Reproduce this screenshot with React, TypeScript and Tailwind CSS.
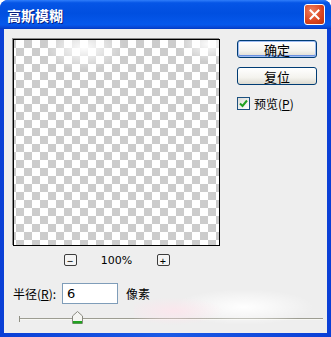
import React from "react";

const cjk = { fontFamily: '"Noto Sans CJK SC", "Liberation Sans", sans-serif' };

function XpButton({ label, isDefault }: { label: string; isDefault?: boolean }) {
  return (
    <button
      className={`flex h-[18px] w-[80px] items-center justify-center rounded-[3px] border border-[#003C74] bg-[linear-gradient(to_bottom,#ffffff_0%,#f4f3ee_60%,#dcdad0_100%)] text-[13px] leading-none text-black ${
        isDefault ? "shadow-[inset_0_0_0_1px_#9fbdf2,inset_0_-1px_0_1px_#6b91e0]" : ""
      }`}
      style={cjk}
    >
      {label}
    </button>
  );
}

function ZoomBtn({ sign }: { sign: string }) {
  return (
    <div className="flex h-[12px] w-[13px] items-center justify-center rounded-[2px] border border-[#3c3c3c] bg-[#f4f4f4] text-[11px] leading-none text-black">
      {sign}
    </div>
  );
}

export default function App() {
  return (
    <div className="flex h-[337px] w-[331px] flex-col overflow-hidden rounded-t-[8px] bg-[linear-gradient(to_right,#0a3fd6,#1a5ae6_50%,#0a3fd6)]">
      {/* title bar */}
      <div className="flex h-[29px] shrink-0 items-center justify-between bg-[linear-gradient(to_bottom,#2f7dfa_0%,#0555e6_10%,#004fe0_45%,#0558ec_85%,#0848d6_94%,#003bc4_100%)] pl-[7px] pr-[6px]">
        <span
          className="text-[14px] font-bold leading-none text-white [text-shadow:1px_1px_0_#0a1f80]"
          style={cjk}
        >
          高斯模糊
        </span>
        <div className="flex h-[21px] w-[21px] items-center justify-center rounded-[3px] border border-white bg-[radial-gradient(circle_at_35%_30%,#ee7f5e,#d9431e_60%,#b8330c)]">
          <svg width="11" height="11" viewBox="0 0 11 11">
            <path d="M1.5 1.5 L9.5 9.5 M9.5 1.5 L1.5 9.5" stroke="white" strokeWidth="2" strokeLinecap="square" />
          </svg>
        </div>
      </div>

      {/* body */}
      <div className="relative mx-[4px] mb-[4px] flex-1 bg-[#eeeeee]">
        <div className="flex pl-[9px] pt-[10px]">
          <div className="flex flex-col">
            <div className="relative h-[207px] w-[207px] border border-black shadow-[-1px_-1px_0_#8a8a8a]">
              <div className="h-full w-full bg-[conic-gradient(#cccccc_25%,#ffffff_0_50%,#cccccc_0_75%,#ffffff_0)] bg-[length:16px_16px] bg-[position:2px_0px]" />
              <div className="pointer-events-none absolute inset-0 bg-[radial-gradient(ellipse_40px_22px_at_70px_8px,rgba(255,255,255,0.95),rgba(255,255,255,0)),radial-gradient(ellipse_30px_18px_at_195px_4px,rgba(255,255,255,0.95),rgba(255,255,255,0))]" />
            </div>
            <div className="mt-[8px] flex items-center justify-center">
              <ZoomBtn sign="−" />
              <span
                className="w-[80px] text-center text-[11px] leading-none text-black"
                style={{ fontFamily: '"DejaVu Sans", sans-serif' }}
              >
                100%
              </span>
              <ZoomBtn sign="+" />
            </div>
          </div>

          <div className="ml-[17px] mt-[1px] flex flex-col">
            <XpButton label="确定" isDefault />
            <div className="mt-[9px]">
              <XpButton label="复位" />
            </div>
            <label className="mt-[12px] flex items-center gap-[4px] text-[12px] leading-none text-black" style={cjk}>
              <span className="flex h-[13px] w-[13px] items-center justify-center border border-[#1c5180] bg-[linear-gradient(135deg,#dcdcd7,#ffffff)]">
                <svg width="9" height="9" viewBox="0 0 9 9">
                  <path d="M1 4.5 L3.5 7 L8 1.5" stroke="#21a121" strokeWidth="2" fill="none" />
                </svg>
              </span>
              <span>
                预览(<span className="underline">P</span>)
              </span>
            </label>
          </div>
        </div>

        {/* radius row */}
        <div className="mt-[17px] flex items-center pl-[9px] text-[12px] leading-none text-black" style={cjk}>
          <span className="w-[49px]">
            半径(<span className="underline">R</span>):
          </span>
          <div
            className="flex h-[21px] w-[56px] items-center border border-[#7f9db9] bg-white pl-[4px] text-[13px]"
            style={{ fontFamily: '"DejaVu Sans", sans-serif' }}
          >
            6
          </div>
          <span className="ml-[8px]">像素</span>
        </div>

        {/* slider */}
        <div className="relative mt-[7px] ml-[15px] mr-[4px] h-[14px]">
          <div className="absolute left-0 right-0 top-[7px] h-[2px] border-t border-[#9d9d92] bg-[#f8f8f4]" />
          <div className="absolute left-0 top-[5px] h-[6px] w-[1px] bg-[#8f8f84]" />
          <svg className="absolute left-[53px] top-0" width="11" height="13" viewBox="0 0 11 13">
            <path d="M0.5 12.5 V5 L5.5 0.5 L10.5 5 V12.5 Z" fill="#f5f5f2" stroke="#8a8a80" />
            <rect x="1" y="10" width="9" height="2.5" fill="#21a121" />
          </svg>
        </div>

        {/* faint watermark glow */}
        <div className="pointer-events-none absolute bottom-[0px] left-[130px] h-[44px] w-[190px] bg-[radial-gradient(ellipse_50px_14px_at_40px_22px,rgba(255,228,236,0.75),rgba(255,255,255,0)),radial-gradient(ellipse_70px_18px_at_110px_18px,rgba(255,255,255,0.97),rgba(255,255,255,0))]" />
      </div>
    </div>
  );
}
